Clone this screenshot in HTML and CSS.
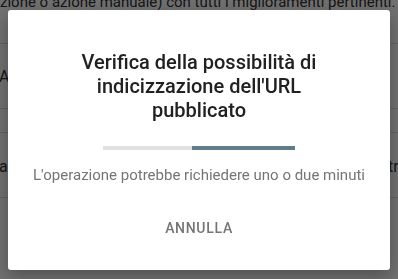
FILE: index.html
```html
<!DOCTYPE html>
<html>
<head>
  <title>Controllo URL</title>
  <meta charset='utf-8'>
  <link rel="stylesheet" href="styles.css">
</head>
<body>

<div class='page'>
  <p class='intro'>zione o azione manuale) con tutti i miglioramenti pertinenti. <a>Le</a></p>
  <div class='row tall'><span class='left'>AGGIORNA</span></div>
  <div class='row short'></div>
  <div class='row tall low'><span class='left'>Copertura</span><span class='right'>trasmissione</span></div>
  <div class='row tall'></div>
</div>

<div class='overlay'>
  <div class='dialog'>
    <h2 class='title'>Verifica della possibilità di indicizzazione dell'URL pubblicato</h2>
    <div class='bar'><span class='fill'></span></div>
    <p class='note'>L'operazione potrebbe richiedere uno o due minuti</p>
    <button class='cancel'>Annulla</button>
  </div>
</div>

</body>
</html>
```

FILE: styles.css
```css
body {
  margin:0;
  padding:0;
  font-family:'Roboto', 'Liberation Sans', sans-serif;
  background:#fff;
  color:#212121;
  overflow:hidden;
}

.page {
  width:398px;
}

.intro {
  margin:-8px 0 0 0;
  font-size:15px;
  line-height:20px;
  white-space:nowrap;
  color:#333;
}

.intro a {
  text-decoration:underline;
  color:#333;
}

.row {
  border-top:1px solid #ddd;
  display:flex;
  justify-content:space-between;
  font-size:16px;
  white-space:nowrap;
  overflow:hidden;
}

.intro + .row {
  margin-top:31px;
}

.row.tall {
  height:64px;
  align-items:center;
}

.row.short {
  height:23px;
}

.row.low {
  align-items:flex-end;
}

.left {
  margin-left:-1px;
  color:#333;
}

.row.low .left {
  margin-left:-63px;
  margin-bottom:21px;
}

.row.low .right {
  margin-right:-82px;
  margin-bottom:21px;
  color:#333;
}

.overlay {
  position:fixed;
  top:0;
  left:0;
  right:0;
  bottom:0;
  background:rgba(0,0,0,0.56);
  display:flex;
  align-items:center;
  justify-content:center;
}

.dialog {
  width:382px;
  height:260px;
  box-sizing:border-box;
  background:#fff;
  border-radius:3px;
  box-shadow:0 6px 18px rgba(0,0,0,0.3);
  padding:40px 16px 0;
  display:flex;
  flex-direction:column;
  align-items:center;
  text-align:center;
}

.title {
  margin:0;
  max-width:260px;
  font-size:20px;
  line-height:24px;
  font-weight:500;
  color:#212121;
}

.bar {
  margin-top:24px;
  width:192px;
  height:4px;
  background:#e0e0e0;
  display:flex;
}

.fill {
  margin-left:89px;
  flex:1;
  background:#607d8b;
}

.note {
  margin:13px 0 0 0;
  font-size:15px;
  line-height:24px;
  color:#757575;
  white-space:nowrap;
}

.cancel {
  margin-top:23px;
  height:36px;
  padding:0 8px;
  border:0;
  background:none;
  font-family:'Roboto', 'Liberation Sans', sans-serif;
  font-size:14px;
  font-weight:500;
  letter-spacing:0.7px;
  text-transform:uppercase;
  color:#757575;
}
```
